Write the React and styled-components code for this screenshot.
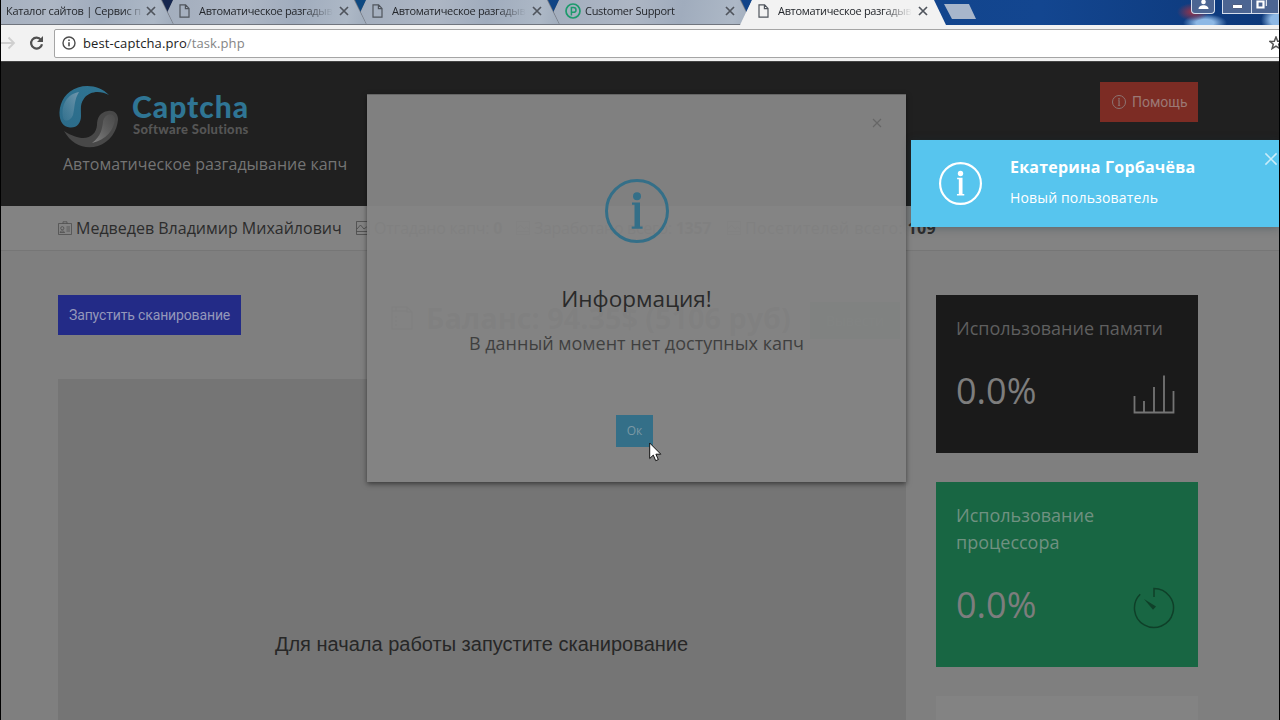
import React from 'react'
import styled, { createGlobalStyle } from 'styled-components'

const tabs = [
  { title: 'Каталог сайтов | Сервис п', width: 139 },
  { title: 'Автоматическое разгадыв', icon: 'page', width: 134 },
  { title: 'Автоматическое разгадыв', icon: 'page', width: 134 },
  { title: 'Customer Support', icon: 'support', width: 134 },
  { title: 'Автоматическое разгадыв', icon: 'page', width: 134, active: true },
]

function PageIcon() {
  return (
    <svg width="11" height="14" viewBox="0 0 11 14" fill="none" stroke="#4f545c" strokeWidth="1.2">
      <path d="M1 .8h5.6L10 4.4v8.8H1zM6.4.8v3.8H10" />
    </svg>
  )
}

function SupportIcon() {
  return (
    <svg width="16" height="16" viewBox="0 0 16 16" fill="none" stroke="#1d9a6c">
      <circle cx="8" cy="8" r="7" strokeWidth="1.7" />
      <path d="M6.4 12.4V4.5h2.2a2.4 2.4 0 0 1 0 4.8H6.4" strokeWidth="1.5" />
    </svg>
  )
}

function Cross({ size, color, weight }) {
  return (
    <svg width={size} height={size} viewBox="0 0 10 10" fill="none" stroke={color} strokeWidth={weight}>
      <path d="M1 1l8 8M9 1L1 9" />
    </svg>
  )
}

function InfoIcon({ size, color, weight }) {
  return (
    <svg width={size} height={size} viewBox="0 0 64 64" fill="none">
      <circle cx="32" cy="32" r={32 - weight / 2} stroke={color} strokeWidth={weight} />
      <circle cx="32" cy="17.2" r="4" fill={color} />
      <path fill={color} d="M27 23.5h8v24h2.6v2.3H26.7v-2.3h2.8V25.8H27z" />
    </svg>
  )
}

function Logo() {
  return (
    <svg width="60" height="64" viewBox="0 0 60 64">
      <defs>
        <linearGradient id="blue" x1="0" y1="1" x2="1" y2="0">
          <stop offset="0" stopColor="#2c6b89" />
          <stop offset="1" stopColor="#2f7593" />
        </linearGradient>
        <linearGradient id="blueShine" x1="0" y1="1" x2="1" y2="0">
          <stop offset="0" stopColor="#5b8ba3" stopOpacity=".2" />
          <stop offset="1" stopColor="#7196ac" />
        </linearGradient>
        <linearGradient id="greyShine" x1="0" y1="1" x2="1" y2="0">
          <stop offset="0" stopColor="#868686" />
          <stop offset="1" stopColor="#555" stopOpacity=".3" />
        </linearGradient>
      </defs>
      <path fill="url(#blue)" d="M50 10C42 2 30-1 19 2.500C7 6 1 17 .5 27C.2 36 4 42 11 42.500C18 43 22 38 22 31C22 23 21 19 25 13.500C31 6 41 5.500 50 10z" />
      <path fill="url(#blueShine)" d="M4 32C2 20 8 9 20 7C15 15 16 22 14 30C12 36 5 38 4 32z" />
      <path fill="#484848" d="M5 46C13 60 26 65 39 61C51 57 58 46 59 35C59.500 29 55 25 49 26C41 27 38 33 38 40C37 52 25 59 5 46z" />
      <path fill="url(#greyShine)" d="M33 58C42 51 43 44 44 37C45 29 54 26 56 34C55 45 47 55 33 58z" />
    </svg>
  )
}

function UserCardIcon() {
  return (
    <svg width="14" height="14" viewBox="0 0 14 14" fill="none" stroke="#484848" strokeWidth=".7">
      <path d="M.5 2.500h13v11H.5zM5 2.500V.8h4v1.700M8.500 6h3.500M8.500 8h3.500M8.500 10h3.500M2 11.500c0-2 4.500-2 4.500 0z" />
      <circle cx="4.300" cy="7.200" r="1.600" />
    </svg>
  )
}

function PictureIcon() {
  return (
    <svg width="14" height="14" viewBox="0 0 14 14" fill="none" stroke="#484848" strokeWidth=".8">
      <path d="M.5.5h13v13H.5zM.5 10.500h13M1 8l3.500-4 3.500 4 2.500-2L13 8" />
    </svg>
  )
}

function WalletIcon() {
  return (
    <svg width="22" height="24" viewBox="0 0 22 24" fill="none" stroke="#222" strokeWidth="1.300">
      <path d="M1 1h15l5 5v17H1zM1 5h15M16 1v5h5M5 1v4M4 11h2M4 15h2M4 19h2" />
    </svg>
  )
}

function BarsIcon() {
  return (
    <svg width="42" height="39" viewBox="0 0 42 39" fill="none" stroke="#747474" strokeWidth="1.800">
      <path d="M1.500 21v16.500h39V16M11 37V26M21 37V12M31 37V.5" />
    </svg>
  )
}

function GaugeIcon() {
  return (
    <svg width="42" height="42" viewBox="0 0 42 42" fill="none" stroke="#0f4029" strokeWidth="1.500">
      <path d="M21 10V1.500A19.500 19.500 0 1 1 7.200 7.200" />
      <path d="M11 12l12 7.500-3 3.200z" fill="#0f4029" stroke="none" />
    </svg>
  )
}

function App() {
  return (
    <Screen>
      <GlobalStyle />
      <TabStrip>
        {tabs.map((tab, i) => (
          <Tab key={i} $active={tab.active} $order={tab.active ? 9 : 8 - i}>
            <TabBody $active={tab.active} $wide={!tab.icon}>
              {tab.icon === 'page' && <PageIcon />}
              {tab.icon === 'support' && <SupportIcon />}
              <TabTitle $width={tab.width} $support={tab.icon === 'support'}>
                {tab.title}
              </TabTitle>
              <Cross size={10} color="#50555d" weight={1.7} />
            </TabBody>
          </Tab>
        ))}
        <NewTab />
        <WindowButtons>
          <UserButton>
            <svg width="11" height="9" viewBox="0 0 11 9" fill="#fff">
              <circle cx="5.500" cy="2" r="2.300" />
              <path d="M.5 9c0-5 10-5 10 0z" />
            </svg>
          </UserButton>
          <FrameButton $width={30}>
            <svg width="11" height="5" viewBox="0 0 11 5">
              <path d="M.5.5h10v4H.5z" fill="#fff" stroke="#4d5d80" />
            </svg>
          </FrameButton>
          <FrameButton $width={27} $cut>
            <svg width="11" height="11" viewBox="0 0 11 11" fill="none" stroke="#fff">
              <path d="M3 .7h7.300V8" />
              <path d="M1.500 3.500h6v6h-6z" strokeWidth="2.200" />
            </svg>
          </FrameButton>
        </WindowButtons>
      </TabStrip>
      <Toolbar>
        <svg width="16" height="16" viewBox="0 0 16 16" fill="none" stroke="#cfcfcf" strokeWidth="1.800">
          <path d="M0 8h13M7.500 2.500L13 8l-5.500 5.500" />
        </svg>
        <svg width="16" height="16" viewBox="0 0 16 16" fill="none" stroke="#505050" strokeWidth="2.200">
          <path d="M12 4.800A5.500 5.500 0 1 0 13 9.200" />
          <path d="M14 1v6H8z" fill="#505050" stroke="none" />
        </svg>
        <AddressBar>
          <svg width="14" height="14" viewBox="0 0 14 14" fill="none" stroke="#4c4c4c" strokeWidth="1.400">
            <circle cx="7" cy="7" r="6" />
            <path d="M7 6.200v4M7 3.500V5" strokeWidth="1.600" />
          </svg>
          <Address>
            best-captcha.pro<span>/task.php</span>
          </Address>
          <svg width="14" height="14" viewBox="0 0 14 14" fill="none" stroke="#555" strokeWidth="1.500">
            <path d="M7 1l1.700 4.200 4.500.2-3.500 2.800 1.200 4.400L7 10.100l-3.900 2.500 1.200-4.400L.8 5.400l4.500-.2z" />
          </svg>
        </AddressBar>
      </Toolbar>

      <Header>
        <div>
          <Brand>
            <Logo />
            <div>
              <BrandName>Captcha</BrandName>
              <BrandSub>Software Solutions</BrandSub>
            </div>
          </Brand>
          <Tagline>Автоматическое разгадывание капч</Tagline>
        </div>
        <HelpButton>
          <InfoIcon size={14} color="#8d7674" weight={4.5} />
          Помощь
        </HelpButton>
      </Header>

      <StatusBar>
        <Status $width={298}>
          <UserCardIcon />
          <span>Медведев Владимир Михайлович</span>
        </Status>
        <Status $width={160} $spacing={-0.25}>
          <PictureIcon />
          <span>Отгадано капч: <b>0</b></span>
        </Status>
        <Status $width={211} $spacing={-0.3}>
          <PictureIcon />
          <span>Заработано всего: <b>1357</b></span>
        </Status>
        <Status $width={211} $spacing={0.38}>
          <PictureIcon />
          <span>Посетителей всего: <b>109</b></span>
        </Status>
      </StatusBar>

      <Content>
        <Main>
          <Actions>
            <ScanButton>Запустить сканирование</ScanButton>
            <Balance>
              <WalletIcon />
              <span>Баланс: 94.35$ (5106 руб)</span>
            </Balance>
            <PayoutButton>Вывести</PayoutButton>
          </Actions>
          <Well>Для начала работы запустите сканирование</Well>
        </Main>
        <Aside>
          <StatCard $background="#1a1a1a" $height={158} $color="#5f5f5f">
            <StatTitle>Использование памяти</StatTitle>
            <StatRow>
              <StatValue>0.0%</StatValue>
              <BarsIcon />
            </StatRow>
          </StatCard>
          <StatCard $background="#186643" $height={185} $color="#709181">
            <StatTitle>Использование процессора</StatTitle>
            <StatRow>
              <StatValue>0.0%</StatValue>
              <GaugeIcon />
            </StatRow>
          </StatCard>
          <StatCard $background="#838383" $height={158} />
        </Aside>
      </Content>

      <Modal>
        <ModalClose>
          <Cross size={10} color="#666" weight={1.2} />
        </ModalClose>
        <InfoIcon size={64} color="#346f88" weight={3} />
        <ModalTitle>Информация!</ModalTitle>
        <ModalText>В данный момент нет доступных капч</ModalText>
        <OkButton>Ок</OkButton>
      </Modal>

      <Toast>
        <InfoIcon size={43} color="#fff" weight={3.2} />
        <ToastText>
          <ToastTitle>Екатерина Горбачёва</ToastTitle>
          <ToastMessage>Новый пользователь</ToastMessage>
        </ToastText>
        <ToastClose>
          <Cross size={14} color="#c9ecf9" weight={1.1} />
        </ToastClose>
      </Toast>

      <Cursor width="13" height="20" viewBox="0 0 13 20">
        <path d="M.7 1v15.500l3.600-3.400 2.400 5.600 2.600-1.100-2.400-5.400h4.900z" fill="#fff" stroke="#111" />
      </Cursor>
    </Screen>
  )
}

const GlobalStyle = createGlobalStyle`
  body {
    margin: 0;
    overflow: hidden;
  }
  * {
    box-sizing: border-box;
  }
  svg {
    display: block;
    flex: none;
  }
`

const Screen = styled.div`
  position: relative;
  width: 1280px;
  height: 720px;
  overflow: hidden;
  border-left: 1px solid #000;
  border-right: 1px solid #000;
  background: #7f7f7f;
  font-family: 'Open Sans', 'Noto Sans', sans-serif;
`

const TabStrip = styled.div`
  height: 25px;
  display: flex;
  overflow: hidden;
  background:
    radial-gradient(ellipse 16px 9px at 1192px 12px, #823552 20%, transparent),
    radial-gradient(ellipse 22px 9px at 1204px 23px, #8db8e5 40%, transparent),
    radial-gradient(ellipse 16px 14px at 1276px 20px, #8db8e5 40%, transparent),
    linear-gradient(90deg, #15264f 0, #15264f 180px, #0d4a80 300px, #0f4285 600px, #134690 1040px, #0c3778 1278px);
`

const Tab = styled.div`
  position: relative;
  z-index: ${({ $order }) => $order};
  flex: none;
  width: 206px;
  height: 25px;
  margin-right: -13px;
  background: ${({ $active }) => ($active ? '#f2f2f2' : '#70757e')};
  clip-path: polygon(12px 0, calc(100% - 12px) 0, 100% 100%, 0 100%);
  &:first-child {
    margin-left: -33px;
  }
`

const TabBody = styled.div`
  height: ${({ $active }) => ($active ? 25 : 24)}px;
  display: flex;
  align-items: center;
  padding: 0 18px 3px ${({ $wide }) => ($wide ? 38 : 18)}px;
  background: ${({ $active }) =>
    $active ? '#f2f2f2' : 'linear-gradient(100deg, #a2adbd, #adb6c4 40%, #a0acbd 65%, #adb8c6 90%, #a0acbc)'};
  clip-path: polygon(12px 0, calc(100% - 13px) 0, calc(100% - 1px) 100%, 1px 100%);
`

const TabTitle = styled.div`
  width: ${({ $width }) => $width}px;
  margin-left: ${({ $support }) => ($support ? 4 : 9)}px;
  margin-right: auto;
  white-space: nowrap;
  font-size: 11px;
  line-height: 16px;
  letter-spacing: ${({ $support }) => ($support ? -0.3 : -0.33)}px;
  color: #24272c;
  mask-image: linear-gradient(90deg, #000 105px, transparent 134px);
  ${TabBody} > &:first-child {
    margin-left: 0;
    letter-spacing: -0.25px;
    mask-image: linear-gradient(90deg, #000 118px, transparent 138px);
  }
`

const NewTab = styled.div`
  flex: none;
  width: 33px;
  height: 15px;
  margin: 4px 0 0 11px;
  background: #a8b6cb;
  clip-path: polygon(0 0, 25px 0, 32px 100%, 8px 100%);
`

const WindowButtons = styled.div`
  display: flex;
  margin-left: auto;
`

const FrameButton = styled.div`
  width: ${({ $width }) => $width}px;
  height: 14px;
  display: flex;
  align-items: flex-end;
  justify-content: center;
  padding: 0 ${({ $cut }) => ($cut ? 7 : 0)}px 4px 0;
  border: 1px solid #d5deec;
  border-top: 0;
  border-left-width: ${({ $cut }) => ($cut ? 0 : 1)}px;
  background: #4c6592;
`

const UserButton = styled(FrameButton).attrs({ $width: 24 })`
  margin-right: 7px;
  border-radius: 0 0 4px 4px;
`

const Toolbar = styled.div`
  height: 37px;
  display: flex;
  align-items: center;
  gap: 12px;
  background: #f2f2f2;
  border-bottom: 1px solid #444;
`

const AddressBar = styled.div`
  flex: 1;
  height: 29px;
  display: flex;
  align-items: center;
  margin-left: -3px;
  margin-right: -5px;
  padding-left: 7px;
  border: 1px solid #a5a5a5;
  border-radius: 2px;
  background: #fff;
`

const Address = styled.div`
  margin-left: 7px;
  margin-right: auto;
  font-size: 13px;
  letter-spacing: 0.1px;
  color: #222;
  span {
    color: #858585;
  }
`

const Header = styled.div`
  height: 144px;
  display: flex;
  justify-content: space-between;
  align-items: flex-start;
  padding: 20px 81px 0 57px;
  background: #202020;
`

const Brand = styled.div`
  display: flex;
  margin: 3px 0 0 1px;
  gap: 13px;
`

const BrandName = styled.div`
  margin-top: 4px;
  font-family: Lato, sans-serif;
  font-weight: 900;
  font-size: 30px;
  line-height: 34px;
  letter-spacing: 1px;
  color: #2f7594;
`

const BrandSub = styled.div`
  margin: -1px 0 0 1px;
  font-family: Lato, sans-serif;
  font-weight: 900;
  font-size: 13px;
  line-height: 14px;
  letter-spacing: 0.3px;
  color: #555;
`

const Tagline = styled.div`
  margin: 3px 0 0 5px;
  font-size: 16px;
  line-height: 24px;
  color: #747474;
`

const HelpButton = styled.div`
  width: 98px;
  height: 40px;
  display: flex;
  align-items: center;
  gap: 6px;
  padding-left: 12px;
  background: #7c2c24;
  color: #9b7874;
  font-family: Roboto, sans-serif;
  font-size: 14px;
`

const StatusBar = styled.div`
  height: 45px;
  display: flex;
  align-items: center;
  padding: 0 0 1px 57px;
  background: #838383;
  border-bottom: 1px solid #767676;
`

const Status = styled.div`
  flex: none;
  width: ${({ $width }) => $width}px;
  display: flex;
  align-items: center;
  gap: 4px;
  white-space: nowrap;
  font-size: 16px;
  line-height: 24px;
  letter-spacing: ${({ $spacing }) => $spacing || 0}px;
  color: #2c2c2c;
`

const Content = styled.div`
  display: flex;
  gap: 30px;
  padding: 44px 81px 0 57px;
`

const Main = styled.div`
  width: 848px;
`

const Actions = styled.div`
  height: 84px;
  display: flex;
  align-items: flex-start;
`

const ScanButton = styled.div`
  width: 183px;
  height: 40px;
  padding-left: 11px;
  background: #232b87;
  color: #9497ba;
  font-family: Roboto, sans-serif;
  font-size: 14px;
  letter-spacing: -0.14px;
  line-height: 40px;
  white-space: nowrap;
`

const Balance = styled.div`
  display: flex;
  align-items: center;
  gap: 13px;
  margin-left: 150px;
  white-space: nowrap;
  color: #1a1a1a;
  font-weight: 700;
  font-size: 28.8px;
  line-height: 46px;
`

const PayoutButton = styled.div`
  flex: none;
  width: 90px;
  height: 37px;
  margin: 7px 6px 0 auto;
  background: #235b42;
  color: #45705c;
  font-size: 14px;
  line-height: 37px;
  text-align: center;
`

const Well = styled.div`
  height: 530px;
  padding-right: 1px;
  background: #757575;
  color: #272727;
  font-family: 'Liberation Sans', sans-serif;
  font-size: 20px;
  line-height: 530px;
  text-align: center;
`

const Aside = styled.div`
  width: 262px;
  display: flex;
  flex-direction: column;
  gap: 29px;
`

const StatCard = styled.div`
  flex: none;
  height: ${({ $height }) => $height}px;
  padding: 20px 23px 0 20px;
  background: ${({ $background }) => $background};
  color: ${({ $color }) => $color};
`

const StatTitle = styled.div`
  font-size: 18px;
  line-height: 27px;
`

const StatRow = styled.div`
  display: flex;
  align-items: center;
  justify-content: space-between;
  margin-top: 22px;
  svg {
    margin-top: 6px;
  }
`

const StatValue = styled.div`
  color: #7d7d7d;
  font-size: 36px;
  line-height: 54px;
`

const Modal = styled.div`
  position: absolute;
  z-index: 10;
  left: 366px;
  top: 94px;
  width: 539px;
  height: 388px;
  display: flex;
  flex-direction: column;
  align-items: center;
  padding-top: 84px;
  border-top: 1px solid #656565;
  background: rgba(132, 132, 132, 0.965);
  box-shadow: 0 2px 5px rgba(0, 0, 0, 0.5);
`

const ModalClose = styled.div`
  position: absolute;
  right: 24px;
  top: 23px;
`

const ModalTitle = styled.div`
  margin-top: 39px;
  color: #2a2a2a;
  font-size: 22.5px;
  line-height: 33px;
`

const ModalText = styled.div`
  margin-top: 15px;
  color: #3f3f3f;
  font-size: 18px;
  line-height: 27px;
`

const OkButton = styled.div`
  width: 37px;
  height: 32px;
  margin: 58px 4px 0 0;
  background: #346f88;
  color: #7b98a4;
  font-size: 12px;
  line-height: 32px;
  text-align: center;
`

const Toast = styled.div`
  position: absolute;
  z-index: 11;
  right: 0;
  top: 140px;
  width: 368px;
  height: 87px;
  display: flex;
  align-items: center;
  padding-left: 28px;
  background: #57c5ee;
  color: #fff;
  box-shadow: 0 1px 8px rgba(20, 50, 60, 0.35);
`

const ToastText = styled.div`
  margin: -4px 0 0 28px;
`

const ToastTitle = styled.div`
  font-size: 16px;
  font-weight: 700;
  letter-spacing: 0.22px;
  line-height: 24px;
`

const ToastMessage = styled.div`
  margin-top: 9px;
  font-size: 14px;
  letter-spacing: 0.16px;
  line-height: 20px;
`

const ToastClose = styled.div`
  position: absolute;
  right: 1px;
  top: 12px;
`

const Cursor = styled.svg`
  position: absolute;
  z-index: 12;
  left: 648px;
  top: 442px;
`

export default App
